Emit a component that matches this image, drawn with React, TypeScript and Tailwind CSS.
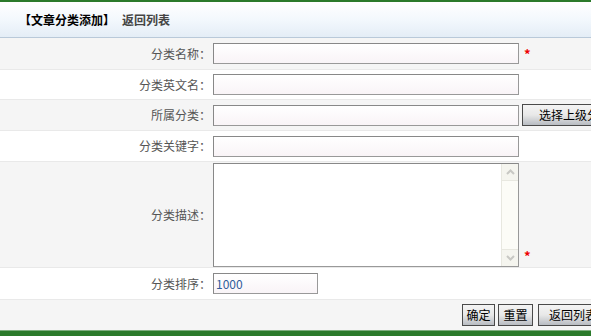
import React from "react";

const font = { fontFamily: '"Noto Sans CJK SC", "Liberation Sans", sans-serif' };

function Field({ w = "w-[306px]", value }: { w?: string; value?: string }) {
  return (
    <div
      className={`${w} h-[21px] border border-[#999] border-t-[#888] border-l-[#888] bg-gradient-to-b from-white to-[#f9f4f7] px-[2px] text-[12px] leading-[19px] text-[#2f5c9a]`}
    >
      {value}
    </div>
  );
}

function Btn({ children, className = "" }: { children: React.ReactNode; className?: string }) {
  return (
    <div
      className={`h-[22px] shrink-0 border border-[#4a4a4a] bg-gradient-to-b from-[#f4f4f4] via-[#e8e8e8] to-[#b8bcc2] text-[12px] leading-[20px] text-black whitespace-nowrap ${className}`}
    >
      {children}
    </div>
  );
}

function Row({
  label,
  h,
  gray,
  children,
}: {
  label: string;
  h: string;
  gray?: boolean;
  children: React.ReactNode;
}) {
  return (
    <div className={`flex items-center ${h} border-b border-[#e9e9e9] ${gray ? "bg-[#f5f5f5]" : "bg-white"}`}>
      <div className="w-[211px] shrink-0 text-right text-[12px] text-[#555]">{label}</div>
      <div className="ml-[2px] flex items-center">{children}</div>
    </div>
  );
}

function Star() {
  return <span className="ml-[5px] text-[13px] font-bold text-[#e00]">*</span>;
}

export default function App() {
  return (
    <div className="w-[591px] h-[336px] overflow-hidden bg-white" style={font}>
      <div className="h-[2px] bg-[#2b7a2b]" />
      <div className="flex h-[36px] items-center border-b border-[#b9c9d9] bg-gradient-to-b from-white via-[#f3f8fd] to-[#e4edf6] pl-[19px] text-[12px] font-bold">
        <span className="text-black">【文章分类添加】</span>
        <span className="ml-[7px] text-[#444]">返回列表</span>
      </div>

      <Row label="分类名称：" h="h-[32px]" gray>
        <Field />
        <Star />
      </Row>
      <Row label="分类英文名：" h="h-[30px]">
        <Field />
      </Row>
      <Row label="所属分类：" h="h-[31px]" gray>
        <Field />
        <Btn className="ml-[3px] w-[90px] pl-[16px]">选择上级分类</Btn>
      </Row>
      <Row label="分类关键字：" h="h-[31px]">
        <Field />
      </Row>
      <div className="flex h-[106px] items-center border-b border-[#e9e9e9] bg-[#f5f5f5]">
        <div className="w-[211px] shrink-0 text-right text-[12px] text-[#555]">分类描述：</div>
        <div className="ml-[2px] flex items-end">
          <div className="flex h-[104px] w-[306px] border border-[#999] border-t-[#888] border-l-[#888] bg-white">
            <div className="flex-1" />
            <div className="flex w-[17px] flex-col border-l border-[#e8e8e0] bg-[#fcfcf7]">
              <div className="flex h-[17px] items-center justify-center border-b border-[#e8e8e0] bg-[#f5f5ef]">
                <svg width="9" height="6" viewBox="0 0 9 6">
                  <path d="M1 5 L4.5 1.5 L8 5" stroke="#c8c8c4" strokeWidth="2" fill="none" />
                </svg>
              </div>
              <div className="flex-1" />
              <div className="flex h-[17px] items-center justify-center border-t border-[#e8e8e0] bg-[#f5f5ef]">
                <svg width="9" height="6" viewBox="0 0 9 6">
                  <path d="M1 1 L4.5 4.5 L8 1" stroke="#c8c8c4" strokeWidth="2" fill="none" />
                </svg>
              </div>
            </div>
          </div>
          <span className="mb-[1px]">
            <Star />
          </span>
        </div>
      </div>
      <Row label="分类排序：" h="h-[32px]">
        <Field w="w-[105px]" value="1000" />
      </Row>
      <div className="flex h-[30px] items-center bg-[#f5f5f5] pl-[462px]">
        <Btn className="w-[33px] text-center">确定</Btn>
        <Btn className="ml-[3px] w-[35px] text-center">重置</Btn>
        <Btn className="ml-[5px] w-[70px] pl-[10px]">返回列表</Btn>
      </div>
      <div className="h-[1px] bg-[#7fae7f]" />
      <div className="h-[5px] bg-[#2b7a2b]" />
    </div>
  );
}
